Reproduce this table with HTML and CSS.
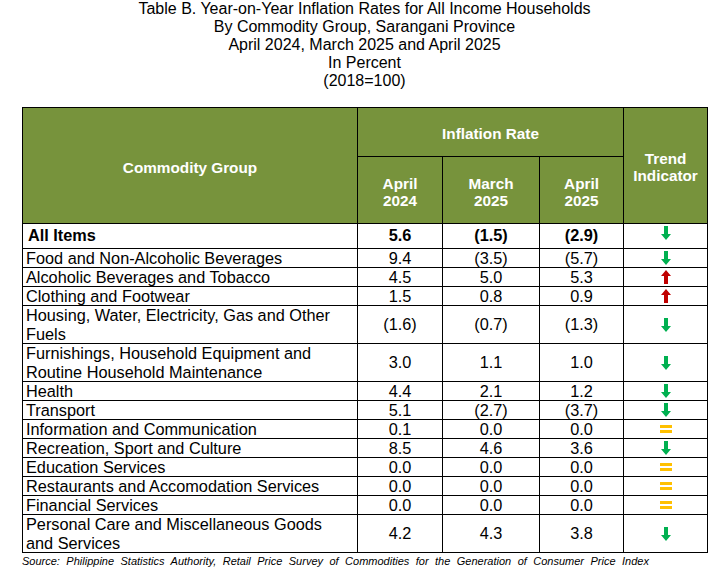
FILE: index.html
```html
<!DOCTYPE html>
<html>
<head>
<meta charset="utf-8">
<link rel="stylesheet" href="styles.css">
</head>
<body>
<div class="page">
  <div class="title">
    <div>Table B. Year-on-Year Inflation Rates for All Income Households</div>
    <div>By Commodity Group, Sarangani Province</div>
    <div>April 2024, March 2025 and April 2025</div>
    <div>In Percent</div>
    <div>(2018=100)</div>
  </div>
  <table class="tbl">
    <colgroup>
      <col class="c1"><col class="c2"><col class="c3"><col class="c4"><col class="c5">
    </colgroup>
    <thead>
      <tr class="h1">
        <th rowspan="2">Commodity Group</th>
        <th colspan="3">Inflation Rate</th>
        <th rowspan="2">Trend<br>Indicator</th>
      </tr>
      <tr class="h2">
        <th>April<br>2024</th>
        <th>March<br>2025</th>
        <th>April<br>2025</th>
      </tr>
    </thead>
    <tbody>
      <tr class="r-all bold">
        <td class="name">All Items</td><td>5.6</td><td>(1.5)</td><td>(2.9)</td>
        <td><svg class="ico" width="10" height="14" viewBox="0 0 10 14"><path d="M3 0h4v8h3l-5 6l-5-6h3z" fill="#00B050"/></svg></td>
      </tr>
      <tr class="r1">
        <td class="name">Food and Non-Alcoholic Beverages</td><td>9.4</td><td>(3.5)</td><td>(5.7)</td>
        <td><svg class="ico" width="10" height="14" viewBox="0 0 10 14"><path d="M3 0h4v8h3l-5 6l-5-6h3z" fill="#00B050"/></svg></td>
      </tr>
      <tr class="r1">
        <td class="name">Alcoholic Beverages and Tobacco</td><td>4.5</td><td>5.0</td><td>5.3</td>
        <td><svg class="ico" width="10" height="14" viewBox="0 0 10 14"><path d="M3 14h4v-8h3l-5-6l-5 6h3z" fill="#C00000"/></svg></td>
      </tr>
      <tr class="r1">
        <td class="name">Clothing and Footwear</td><td>1.5</td><td>0.8</td><td>0.9</td>
        <td><svg class="ico" width="10" height="14" viewBox="0 0 10 14"><path d="M3 14h4v-8h3l-5-6l-5 6h3z" fill="#C00000"/></svg></td>
      </tr>
      <tr class="r2">
        <td class="name">Housing, Water, Electricity, Gas and Other Fuels</td><td>(1.6)</td><td>(0.7)</td><td>(1.3)</td>
        <td><svg class="ico" width="10" height="14" viewBox="0 0 10 14"><path d="M3 0h4v8h3l-5 6l-5-6h3z" fill="#00B050"/></svg></td>
      </tr>
      <tr class="r2b">
        <td class="name">Furnishings, Household Equipment and Routine Household Maintenance</td><td>3.0</td><td>1.1</td><td>1.0</td>
        <td><svg class="ico" width="10" height="14" viewBox="0 0 10 14"><path d="M3 0h4v8h3l-5 6l-5-6h3z" fill="#00B050"/></svg></td>
      </tr>
      <tr class="r1">
        <td class="name">Health</td><td>4.4</td><td>2.1</td><td>1.2</td>
        <td><svg class="ico" width="10" height="14" viewBox="0 0 10 14"><path d="M3 0h4v8h3l-5 6l-5-6h3z" fill="#00B050"/></svg></td>
      </tr>
      <tr class="r1">
        <td class="name">Transport</td><td>5.1</td><td>(2.7)</td><td>(3.7)</td>
        <td><svg class="ico" width="10" height="14" viewBox="0 0 10 14"><path d="M3 0h4v8h3l-5 6l-5-6h3z" fill="#00B050"/></svg></td>
      </tr>
      <tr class="r1">
        <td class="name">Information and Communication</td><td>0.1</td><td>0.0</td><td>0.0</td>
        <td><span class="eq"></span></td>
      </tr>
      <tr class="r1">
        <td class="name">Recreation, Sport and Culture</td><td>8.5</td><td>4.6</td><td>3.6</td>
        <td><svg class="ico" width="10" height="14" viewBox="0 0 10 14"><path d="M3 0h4v8h3l-5 6l-5-6h3z" fill="#00B050"/></svg></td>
      </tr>
      <tr class="r1">
        <td class="name">Education Services</td><td>0.0</td><td>0.0</td><td>0.0</td>
        <td><span class="eq"></span></td>
      </tr>
      <tr class="r1">
        <td class="name">Restaurants and Accomodation Services</td><td>0.0</td><td>0.0</td><td>0.0</td>
        <td><span class="eq"></span></td>
      </tr>
      <tr class="r1">
        <td class="name">Financial Services</td><td>0.0</td><td>0.0</td><td>0.0</td>
        <td><span class="eq"></span></td>
      </tr>
      <tr class="r2b">
        <td class="name">Personal Care and Miscellaneous Goods and Services</td><td>4.2</td><td>4.3</td><td>3.8</td>
        <td><svg class="ico" width="10" height="14" viewBox="0 0 10 14"><path d="M3 0h4v8h3l-5 6l-5-6h3z" fill="#00B050"/></svg></td>
      </tr>
    </tbody>
  </table>
  <div class="source">Source: Philippine Statistics Authority, Retail Price Survey of Commodities for the Generation of Consumer Price Index</div>
</div>
</body>
</html>
```

FILE: styles.css
```css
html, body {
  margin: 0;
  padding: 0;
  background: #ffffff;
}
.page {
  width: 725px;
  font-family: "Liberation Sans", Arial, sans-serif;
  color: #000;
}
.title {
  font-family: "Liberation Sans", Arial, sans-serif;
  font-size: 16px;
  line-height: 18px;
  text-align: center;
  margin-left: 4px;
}
.tbl {
  margin: 17px 0 0 22px;
  border-collapse: collapse;
  table-layout: fixed;
  width: 685px;
  font-size: 16.3px;
}
.c1 { width: 335px; }
.c2 { width: 85px; }
.c3 { width: 97px; }
.c4 { width: 84px; }
.c5 { width: 84px; }
.tbl th, .tbl td {
  border: 1px solid #000;
  padding: 0;
}
.tbl th {
  background: #77933C;
  color: #fff;
  font-weight: bold;
  font-size: 15.3px;
  line-height: 17px;
  vertical-align: middle;
  text-align: center;
}
.h1 th { padding-top: 3px; }
.h2 th { padding-top: 3px; }
.h1 { height: 49px; }
.h2 { height: 67px; }
.tbl td {
  text-align: center;
  vertical-align: middle;
  line-height: 18px;
}
.tbl td.name {
  text-align: left;
  padding-left: 3px;
  padding-right: 6px;
}
.bold td { font-weight: bold; }
.r-all { height: 25px; }
.r-all td { vertical-align: top; padding-top: 2px; }
.r-all td.name { padding-left: 5px; }
.r1 { height: 19px; }
.r2 { height: 37px; }
.r2b { height: 38px; }
.r2 td, .r2b td { line-height: 18.5px; }
.ico {
  display: block;
  margin: 0 auto;
}
.eq {
  display: block;
  margin: 0 auto;
  width: 12px;
  height: 8px;
  border-top: 3px solid #FFC000;
  border-bottom: 3px solid #FFC000;
  box-sizing: border-box;
}
.source {
  margin: 2px 0 0 22px;
  font-size: 11px;
  font-style: italic;
  word-spacing: 3.4px;
  line-height: 13px;
  color: #000;
}
```
